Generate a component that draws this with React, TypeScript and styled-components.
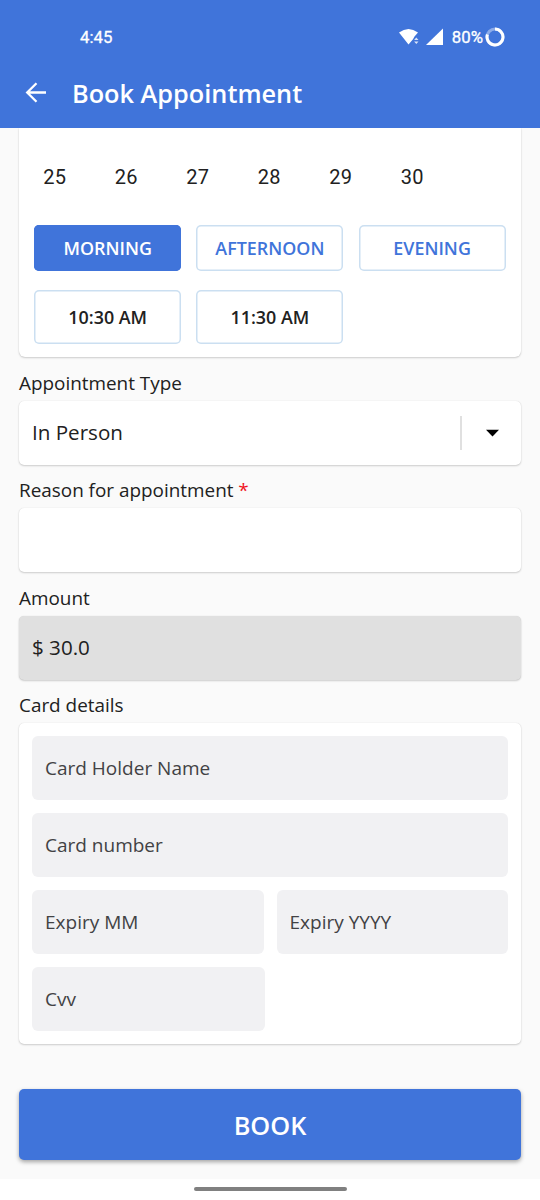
import React from "react";
import styled, { createGlobalStyle } from "styled-components";

const BLUE = "#4074da";

const GlobalStyle = createGlobalStyle`
  * { box-sizing: border-box; }
  body { margin: 0; background: #fafafa; }
  button, input { font: inherit; margin: 0; }
`;

const Screen = styled.div`
  display: flex;
  flex-direction: column;
  width: 540px;
  height: 1200px;
  overflow: hidden;
  background: #fafafa;
  color: #212121;
  font-family: "Open Sans", sans-serif;
`;

const Header = styled.header`
  flex: none;
  height: 128px;
  background: ${BLUE};
  color: #fff;
`;

const StatusBar = styled.div`
  display: flex;
  align-items: center;
  justify-content: space-between;
  height: 72px;
  padding: 2px 35px 0 80px;
  font: 400 16.8px/21px Roboto, sans-serif;
  -webkit-text-stroke: 0.3px currentColor;
`;

const StatusIcons = styled.div`
  display: flex;
  align-items: center;
`;

const Battery = styled.span`
  margin: 0 2px 0 8px;
`;

const AppBar = styled.div`
  display: flex;
  align-items: center;
  height: 41px;
  padding-left: 25px;
`;

const Title = styled.h1`
  margin: 0 0 0 25px;
  font-size: 25.3px;
  line-height: 34px;
  font-weight: 600;
`;

const Content = styled.main`
  flex: none;
  height: 1051px;
  padding: 0 19px;
`;

const Card = styled.section`
  background: #fff;
  border-radius: 5px;
  box-shadow: 0 1px 2px rgba(0, 0, 0, 0.18), 0 0 1px rgba(0, 0, 0, 0.14);
`;

const ScheduleCard = styled(Card)`
  height: 229px;
  padding: 32px 16px 0;
  border-radius: 0 0 6px 6px;
  clip-path: inset(0 -4px -6px -4px);
`;

const Days = styled.div`
  display: grid;
  grid-template-columns: repeat(7, 71.5px);
  margin-left: -16px;
  font: 400 20px/34px Roboto, sans-serif;
  text-align: center;
  letter-spacing: 0.2px;
`;

const SlotGrid = styled.div<{ $top: number }>`
  display: grid;
  grid-template-columns: repeat(3, 147px);
  column-gap: 15.2px;
  margin: ${(p) => p.$top}px 0 0 -0.8px;
`;

const PeriodButton = styled.button<{ $active?: boolean }>`
  height: 46px;
  padding: 0;
  border: 0;
  border-radius: 5px;
  background: ${(p) => (p.$active ? BLUE : "#fff")};
  box-shadow: inset 0 0 0 1.5px ${(p) => (p.$active ? BLUE : "#cbdff1")};
  color: ${(p) => (p.$active ? "#fff" : BLUE)};
  font-size: 17.9px;
  font-weight: 600;
`;

const TimeButton = styled(PeriodButton)`
  height: 54px;
  color: #212121;
`;

const Label = styled.div`
  height: 43.5px;
  padding-top: 12.6px;
  font-size: 18.9px;
  line-height: 26px;
`;

const Required = styled.span`
  color: #f0141e;
`;

const Field = styled(Card)<{ $disabled?: boolean }>`
  display: flex;
  align-items: center;
  height: 64px;
  padding: 0 0 1px 13px;
  background: ${(p) => (p.$disabled ? "#e0e0e0" : "#fff")};
  font-size: 20.6px;
`;

const SelectValue = styled.span`
  flex: 1;
`;

const SelectArrow = styled.span`
  display: flex;
  align-items: center;
  justify-content: center;
  width: 61px;
  height: 34px;
  margin-top: 1px;
  border-left: 2px solid #e0e0e0;
`;

const CardDetails = styled(Card)`
  display: grid;
  grid-template-columns: repeat(2, minmax(0, 1fr));
  gap: 13px;
  height: 321px;
  padding: 13px;
`;

const CardInput = styled.input<{ $wide?: boolean }>`
  grid-column: ${(p) => (p.$wide ? "1 / -1" : "auto")};
  width: 100%;
  height: 64px;
  padding: 0 13px;
  border: 0;
  border-radius: 6px;
  background: #f1f1f3;
  font-size: 19px;
  &::placeholder { color: #424244; opacity: 1; }
`;

const CvvInput = styled(CardInput)`
  width: 233px;
`;

const BookButton = styled.button`
  display: block;
  width: 100%;
  height: 71px;
  margin-top: 45px;
  padding-top: 2px;
  border: 0;
  border-radius: 5px;
  background: ${BLUE};
  color: #fff;
  font-size: 25.3px;
  font-weight: 600;
  box-shadow: 0 2px 4px rgba(0, 0, 0, 0.35);
`;

const NavBar = styled.footer`
  display: flex;
  justify-content: center;
  flex: 1;
  padding-top: 8px;
  background: #fff;
`;

const Handle = styled.div`
  width: 153px;
  height: 4px;
  border-radius: 2px;
  background: #808080;
`;

export default function App() {
  return (
    <>
      <GlobalStyle />
      <Screen>
        <Header>
          <StatusBar>
            <span>4:45</span>
            <StatusIcons>
              <svg width="46" height="20" viewBox="0 0 46 20" fill="#fff">
                <path d="M1 5.5Q10.5-1.5 20 5.5L16.5 9.5 15 12.3 10.5 17.5Z" />
                <path d="M18.3 10.5L20.5 13H16.1ZM18.3 17L16.1 14.5H20.5Z" opacity=".8" />
                <path d="M45 1.5V18H28Z" />
              </svg>
              <Battery>80%</Battery>
              <svg width="20" height="20" viewBox="0 0 20 20" fill="none" stroke="#fff" strokeWidth="3">
                <circle cx="10" cy="10" r="8" opacity=".4" />
                <path d="M10 2A8 8 0 1 1 2.4 7.5" />
              </svg>
            </StatusIcons>
          </StatusBar>
          <AppBar>
            <svg width="22" height="22" viewBox="0 0 22 22" fill="none" stroke="#fff" strokeWidth="2.3">
              <path d="M21 10.5H3M11.5 1.2L2.2 10.5l9.3 9.3" />
            </svg>
            <Title>Book Appointment</Title>
          </AppBar>
        </Header>
        <Content>
          <ScheduleCard>
            <Days>
              {[25, 26, 27, 28, 29, 30].map((d) => (
                <span key={d}>{d}</span>
              ))}
            </Days>
            <SlotGrid $top={31}>
              <PeriodButton $active>MORNING</PeriodButton>
              <PeriodButton>AFTERNOON</PeriodButton>
              <PeriodButton>EVENING</PeriodButton>
            </SlotGrid>
            <SlotGrid $top={19}>
              <TimeButton>10:30 AM</TimeButton>
              <TimeButton>11:30 AM</TimeButton>
            </SlotGrid>
          </ScheduleCard>
          <Label>Appointment Type</Label>
          <Field>
            <SelectValue>In Person</SelectValue>
            <SelectArrow>
              <svg width="14" height="8" viewBox="0 0 14 8">
                <path d="M1 .7h13L7.5 7.5z" />
              </svg>
            </SelectArrow>
          </Field>
          <Label>
            Reason for appointment <Required>*</Required>
          </Label>
          <Field />
          <Label>Amount</Label>
          <Field $disabled>$ 30.0</Field>
          <Label>Card details</Label>
          <CardDetails>
            <CardInput $wide placeholder="Card Holder Name" />
            <CardInput $wide placeholder="Card number" />
            <CardInput placeholder="Expiry MM" />
            <CardInput placeholder="Expiry YYYY" />
            <CvvInput placeholder="Cvv" />
          </CardDetails>
          <BookButton>BOOK</BookButton>
        </Content>
        <NavBar>
          <Handle />
        </NavBar>
      </Screen>
    </>
  );
}
